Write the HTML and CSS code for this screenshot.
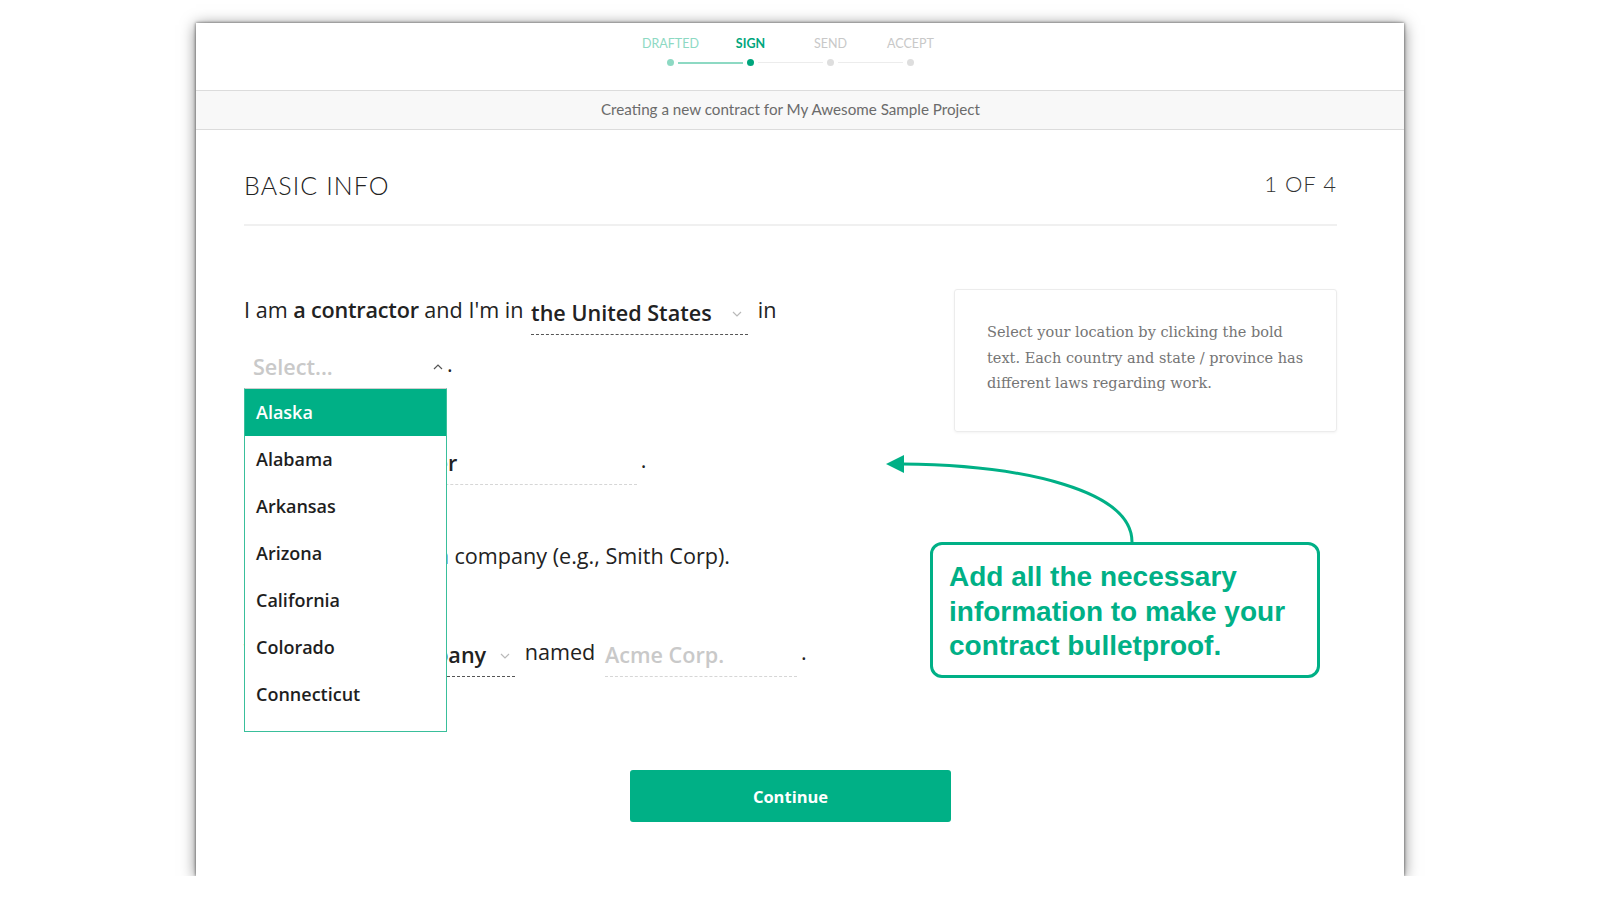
FILE: index.html
```html
<!DOCTYPE html>
<html lang="en">

<head>
    <meta charset="UTF-8">
    <meta name="viewport" content="width=device-width, initial-scale=1.0">
    <title>New Contract - Basic Info</title>
    <link rel="stylesheet" href="styles.css">
</head>

<body>

    <div class="stage">
        <div class="window">

            <div class="steps">
                <div class="step-labels">
                    <span class="done">Drafted</span>
                    <span class="current">Sign</span>
                    <span>Send</span>
                    <span>Accept</span>
                </div>
                <div class="step-track">
                    <i class="dot done"></i><i class="seg done"></i>
                    <i class="dot current"></i><i class="seg"></i>
                    <i class="dot"></i><i class="seg"></i>
                    <i class="dot"></i>
                </div>
            </div>

            <div class="project-bar">Creating a new contract for My Awesome Sample Project</div>

            <div class="content">
                <div class="section-head">
                    <h1>Basic Info</h1>
                    <span class="progress">1 of 4</span>
                </div>

                <div class="form-row">
                    <div class="form">
                        <div class="line">I am <strong>a contractor</strong> and I'm in
                            <span class="pick country">the United States<svg class="chev" width="10" height="6" viewBox="0 0 10 6"><polyline points="1,1 5,5 9,1" /></svg></span>
                            in
                            <span class="pick select-open"><span class="placeholder">Select...</span><svg class="chev up" width="10" height="6" viewBox="0 0 10 6"><polyline points="1,5 5,1 9,5" /></svg><ul class="menu">
                                    <li class="active">Alaska</li>
                                    <li>Alabama</li>
                                    <li>Arkansas</li>
                                    <li>Arizona</li>
                                    <li>California</li>
                                    <li>Colorado</li>
                                    <li>Connecticut</li>
                                </ul></span>.
                        </div>

                        <div class="line">I work as a <span class="field job">Developer</span>.</div>

                        <div class="line">I'll be working with a company (e.g., Smith Corp).</div>

                        <div class="line">The client is
                            <span class="pick entity">a company<svg class="chev" width="10" height="6" viewBox="0 0 10 6"><polyline points="1,1 5,5 9,1" /></svg></span>
                            named
                            <span class="field client"><span class="placeholder">Acme Corp.</span></span>.
                        </div>
                    </div>

                    <div class="hint">
                        Select your location by clicking the bold text. Each country and state / province has different laws regarding work.
                    </div>
                </div>

                <div class="actions">
                    <button class="cta">Continue</button>
                </div>
            </div>

            <svg class="arrow" width="1208" height="853" viewBox="0 0 1208 853">
                <path d="M936,519 C936,468 830,442 706,441" />
                <polygon points="690,441 708,432 708,450" />
            </svg>

            <div class="callout">Add all the necessary information to make your contract bulletproof.</div>

        </div>
    </div>

</body>

</html>
```

FILE: styles.css
```css
body {
    margin: 0;
    background-color: white;
    font-family: "Open Sans", Lato, sans-serif;
    color: #222;
}

.stage {
    display: flex;
    justify-content: center;
    padding-top: 23px;
}

.window {
    position: relative;
    width: 1208px;
    height: 853px;
    background-color: white;
    box-shadow: 0 0 3px rgba(0, 0, 0, 0.6), 0 2px 14px rgba(0, 0, 0, 0.5);
    overflow: hidden;
}

/* progress header */

.steps {
    height: 68px;
    padding: 13px 19px 0 0;
    box-sizing: border-box;
    border-bottom: 1px solid #dcdcdc;
    display: flex;
    flex-direction: column;
    align-items: center;
}

.step-labels {
    display: flex;
}

.step-labels span {
    width: 80px;
    text-align: center;
    font-family: Lato, sans-serif;
    font-size: 12.5px;
    line-height: 16px;
    text-transform: uppercase;
    color: #c8c8c8;
}

.step-labels .done {
    color: #8dd9c3;
}

.step-labels .current {
    color: #00a67d;
    font-weight: 700;
}

.step-track {
    display: flex;
    align-items: center;
    gap: 4px;
    margin-top: 7px;
}

.step-track .dot {
    width: 7px;
    height: 7px;
    border-radius: 50%;
    background-color: #dedede;
}

.step-track .dot.done {
    background-color: #8dd9c3;
}

.step-track .dot.current {
    background-color: #00a67d;
}

.step-track .seg {
    width: 65px;
    height: 1px;
    background-color: #ececec;
}

.step-track .seg.done {
    height: 2px;
    background-color: #8dd9c3;
}

.project-bar {
    height: 38px;
    line-height: 37px;
    padding-right: 19px;
    background-color: #f8f8f8;
    border-bottom: 1px solid #dcdcdc;
    text-align: center;
    font-family: Lato, sans-serif;
    font-size: 15.2px;
    color: #6b6b6b;
}

/* main */

.content {
    padding: 0 67px 0 48px;
}

.section-head {
    display: flex;
    justify-content: space-between;
    align-items: center;
    margin-top: 40px;
    padding-bottom: 24px;
    border-bottom: 2px solid #f0f0f0;
}

.section-head h1 {
    margin: 0;
    font-family: Lato, sans-serif;
    font-size: 25px;
    line-height: 30px;
    font-weight: 300;
    letter-spacing: 1.1px;
    text-transform: uppercase;
    color: #222;
}

.section-head .progress {
    font-family: Lato, sans-serif;
    font-size: 22px;
    font-weight: 300;
    letter-spacing: 1px;
    text-transform: uppercase;
    color: #333;
    margin-top: -3px;
}

.form-row {
    display: flex;
    justify-content: space-between;
    align-items: flex-start;
}

.form {
    width: 570px;
    margin-top: 57px;
}

.form .line {
    margin-bottom: 42px;
    font-size: 21.6px;
    line-height: 54px;
    color: #222;
}

.form strong {
    font-weight: 600;
    letter-spacing: -0.2px;
}

.pick,
.field {
    position: relative;
    display: inline-block;
    line-height: 30px;
    padding-bottom: 6px;
    margin: 0 4px;
    vertical-align: -3px;
    font-weight: 600;
    border-bottom: 1px dashed #555;
}

.pick .chev {
    position: absolute;
    right: 6px;
    top: 13px;
    fill: none;
    stroke: #b9b9b9;
    stroke-width: 1.2;
}

.pick.country {
    width: 217px;
    margin-left: 2px;
}

.pick.entity {
    width: 143px;
    box-sizing: border-box;
    padding-right: 29px;
    text-align: right;
}

.pick.entity .chev {
    right: 5px;
}

.select-open {
    width: 194px;
    margin: 0;
    padding: 0 0 6px 9px;
    border-bottom: none;
}

.select-open .chev.up {
    right: 4px;
    top: 12px;
    stroke: #555;
}

.placeholder {
    color: #c9c9c9;
}

.field {
    border-bottom-color: #d6d6d6;
}

.field.job {
    width: 286px;
    margin-left: -6px;
}

.field.client {
    width: 192px;
}

.menu {
    position: absolute;
    z-index: 5;
    left: 0;
    top: 100%;
    width: 203px;
    height: 344px;
    margin: 0;
    padding: 0;
    list-style: none;
    text-align: left;
    background-color: white;
    border: 1px solid #39bf9b;
    border-top-color: #cfcfcf;
    box-sizing: border-box;
    overflow: hidden;
}

.menu li {
    height: 47px;
    line-height: 47px;
    padding-left: 11px;
    font-size: 18px;
    font-weight: 600;
    color: #1e1e1e;
}

.menu li.active {
    background-color: #00b086;
    color: white;
}

.hint {
    width: 383px;
    margin-top: 63px;
    padding: 30px 28px 34px 32px;
    box-sizing: border-box;
    border: 1px solid #ececec;
    border-radius: 3px;
    box-shadow: 0 1px 3px rgba(0, 0, 0, 0.05);
    font-family: "DejaVu Serif", Georgia, serif;
    font-size: 14.5px;
    line-height: 25.5px;
    color: #757575;
}

.actions {
    display: flex;
    justify-content: center;
    margin-top: 49px;
}

.cta {
    width: 321px;
    height: 52px;
    border: none;
    border-radius: 3px;
    background-color: #00b086;
    color: white;
    font-family: "Open Sans", sans-serif;
    font-size: 16.5px;
    font-weight: 700;
    cursor: pointer;
}

.cta:hover {
    background-color: #009e78;
}

/* annotation */

.arrow {
    position: absolute;
    left: 0;
    top: 0;
    pointer-events: none;
}

.arrow path {
    fill: none;
    stroke: #00b086;
    stroke-width: 3;
}

.arrow polygon {
    fill: #00b086;
}

.callout {
    position: absolute;
    left: 734px;
    top: 519px;
    width: 390px;
    height: 136px;
    padding: 15px 16px;
    box-sizing: border-box;
    border: 3px solid #00b086;
    border-radius: 12px;
    background-color: white;
    font-family: "Liberation Sans", Arial, sans-serif;
    font-size: 28px;
    line-height: 34.5px;
    font-weight: 700;
    color: #00b086;
}
```
